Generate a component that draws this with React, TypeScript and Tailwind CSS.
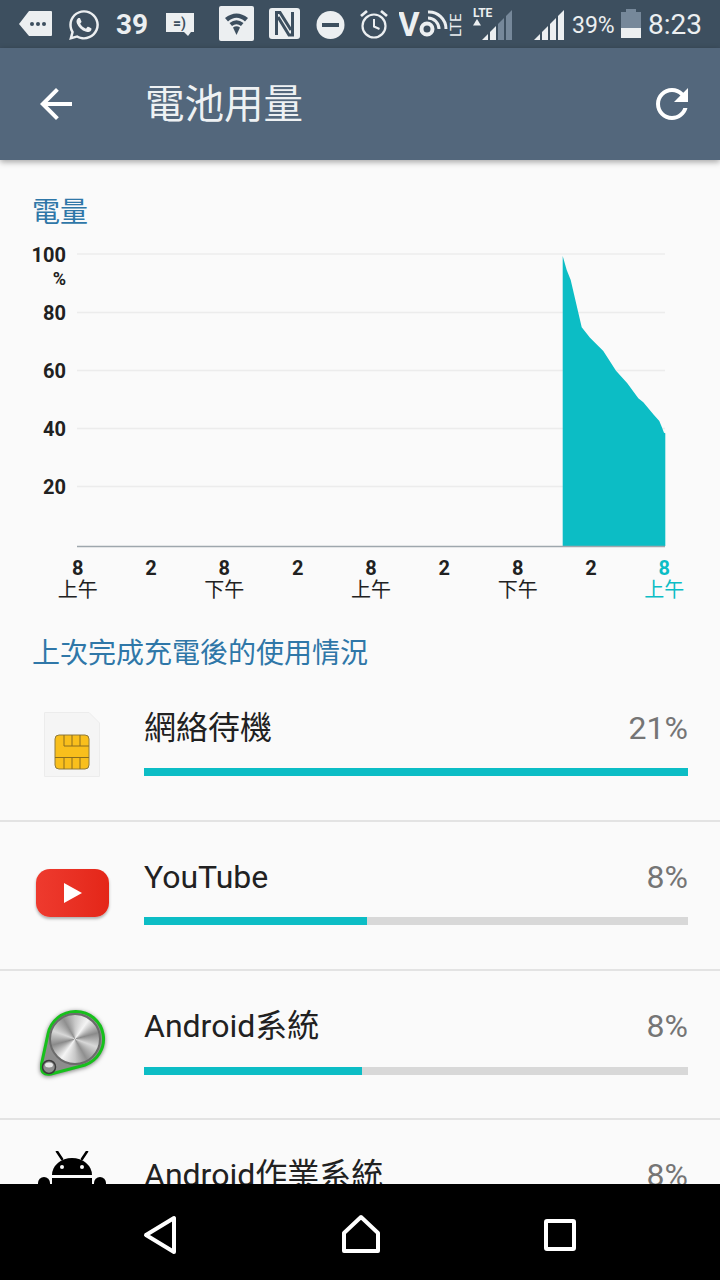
import { ReactNode } from "react";
import { FaWhatsapp } from "react-icons/fa";

const ink = "#eceff1";
const dark = "#3d4f5f";

// status bar icons are drawn in page coordinates, viewBox just crops the slice they sit in
function Slice({ x, w, className, children }: { x: number; w: number; className?: string; children: ReactNode }) {
  return (
    <svg width={w} height={48} viewBox={`${x} 0 ${w} 48`} className={`shrink-0 ${className ?? ""}`}>
      {children}
    </svg>
  );
}

function Bars({ x, lit }: { x: number; lit: number }) {
  return (
    <>
      {[0, 1, 2, 3].map((i) => {
        const a = x + i * 8;
        const b = a + 6;
        return (
          <polygon
            key={i}
            points={`${a},40 ${a},${40 - (a - x)} ${b},${40 - (b - x)} ${b},40`}
            fill={i < lit ? ink : "#76889a"}
          />
        );
      })}
    </>
  );
}

function StatusBar() {
  return (
    <div className="flex h-[48px] shrink-0 items-center bg-[#3d4f5f] pl-[19px] text-[#eceff1]">
      <Slice x={19} w={33}>
        <path d="M19 24 29 11H51a1 1 0 0 1 1 1V35a1 1 0 0 1-1 1H29Z" fill={ink} />
        <circle cx="32" cy="24" r="2" fill={dark} />
        <circle cx="38" cy="24" r="2" fill={dark} />
        <circle cx="44" cy="24" r="2" fill={dark} />
      </Slice>
      <FaWhatsapp className="ml-[15px] mt-[2px] shrink-0" size={34} color={ink} />
      <span className="ml-[15px] mt-[2px] w-[33px] shrink-0 font-['Roboto',sans-serif] text-[28px] font-bold leading-none">39</span>
      <Slice x={166} w={28} className="ml-[17px]">
        <path d="M166 13H194V32H191L188 36 184 32H166Z" fill={ink} />
        <text x="173" y="28" fontSize="14" fontWeight="700" fontFamily="Roboto, sans-serif" fill={dark}>=)</text>
      </Slice>
      <Slice x={219} w={35} className="ml-[25px]">
        <rect x="219" y="6" width="35" height="35" rx="2" fill={ink} />
        <path d="M225 18Q236.500 9 248 18L245 21.500Q236.500 14 228 21.500Z" fill={dark} />
        <path d="M229.500 23Q236.500 17.500 243.500 23L241 26Q236.500 22.500 232 26Z" fill={dark} />
        <path d="M233 27.500Q236.500 25 240 27.500L236.500 35Z" fill={dark} />
      </Slice>
      <Slice x={269} w={31} className="ml-[15px]">
        <rect x="269" y="8" width="31" height="31" rx="3" fill={ink} />
        <path d="M276.500 35V12.500H280L291 30M292.500 12V35H289L278 17" fill="none" stroke={dark} strokeWidth="3" />
      </Slice>
      <Slice x={316} w={29} className="ml-[16px]">
        <circle cx="330.500" cy="25" r="14" fill={ink} />
        <rect x="322" y="23" width="17" height="4" fill={dark} />
      </Slice>
      <Slice x={360} w={28} className="ml-[15px]">
        <circle cx="374" cy="26" r="11.500" fill="none" stroke={ink} strokeWidth="2.200" />
        <path d="M374 19V26.500L379.500 29" fill="none" stroke={ink} strokeWidth="2" />
        <path d="M361 16 367 11M387 16 381 11" fill="none" stroke={ink} strokeWidth="2.800" />
      </Slice>
      <Slice x={399} w={64} className="ml-[11px]">
        <text x="398" y="36" fontSize="33" fontWeight="700" fontFamily="Roboto, sans-serif" fill={ink}>V</text>
        <circle cx="427" cy="29" r="5.500" fill="none" stroke={ink} strokeWidth="4" />
        <path d="M428 18A11 11 0 0 1 439 29M428 12A17 17 0 0 1 446 29" fill="none" stroke={ink} strokeWidth="3" />
        <text x="0" y="0" transform="translate(461 37) rotate(-90)" fontSize="15" fontFamily="Roboto, sans-serif" fill={ink}>LTE</text>
      </Slice>
      <Slice x={473} w={39} className="ml-[10px]">
        <text x="473" y="17" fontSize="12" fontWeight="700" fontFamily="Roboto, sans-serif" fill={ink}>LTE</text>
        <polygon points="477,19 481,25.500 473,25.500" fill={ink} />
        <Bars x={482} lit={2} />
      </Slice>
      <Slice x={534} w={30} className="ml-[22px]">
        <Bars x={534} lit={4} />
      </Slice>
      <span className="ml-[8px] mt-[2px] w-[43px] shrink-0 whitespace-nowrap font-['Roboto',sans-serif] text-[23px] leading-none">39%</span>
      <Slice x={621} w={20} className="ml-[6px]">
        <path d="M621 12H626V9H636V12H641V38H621Z" fill="#76889a" />
        <rect x="621" y="28" width="20" height="10" fill={ink} />
      </Slice>
      <span className="ml-[7px] mt-[2px] shrink-0 font-['Roboto',sans-serif] text-[28px] leading-none">8:23</span>
    </div>
  );
}

function Toolbar() {
  return (
    <div className="relative z-10 flex h-[112px] shrink-0 items-center bg-[#53677c] pl-[32px] pr-[24px] shadow-[0_2px_6px_rgba(0,0,0,0.35)]">
      <svg width="48" height="48" viewBox="0 0 24 24" fill="#fff" className="shrink-0">
        <path d="M20 11H7.830l5.590-5.590L12 4l-8 8 8 8 1.410-1.410L7.830 13H20v-2z" />
      </svg>
      <h1 className="ml-[65px] mt-[2px] flex-1 font-['Roboto','Noto_Sans_CJK_TC',sans-serif] text-[39.500px] font-normal leading-none text-[#eef1f3]">電池用量</h1>
      <svg width="48" height="48" viewBox="0 0 24 24" fill="#fff" className="shrink-0">
        <path d="M17.650 6.350C16.200 4.900 14.210 4 12 4c-4.420 0-7.990 3.580-7.990 8s3.570 8 7.990 8c3.730 0 6.840-2.550 7.730-6h-2.080c-.82 2.330-3.040 4-5.650 4-3.310 0-6-2.690-6-6s2.690-6 6-6c1.660 0 3.140.69 4.220 1.780L13 11h7V4l-2.350 2.350z" />
      </svg>
    </div>
  );
}

const area =
  "562.700,256 566.700,270 570.700,280 581.700,327.300 590,337.700 603.300,351 616,370.700 627.300,383.300 638.300,398.300 643.300,402.300 653.300,414.300 659.300,421 661.700,426.700 664,432.700 665.300,433.300 665.300,546 562.700,546";

function Chart() {
  const yLabels = ["80", "60", "40", "20"];
  const xLabels = [
    ["8", "上午"],
    ["2", ""],
    ["8", "下午"],
    ["2", ""],
    ["8", "上午"],
    ["2", ""],
    ["8", "下午"],
    ["2", ""],
    ["8", "上午"],
  ];
  return (
    <>
      <div className="mt-[9px] flex h-[310px]">
        <div className="w-[66px] shrink-0 pt-[1px] text-right text-[20px] font-bold leading-[24px] text-[#212121]">
          <div className="h-[58px]">
            100
            <div className="text-[18px] leading-[24px]">%</div>
          </div>
          {yLabels.map((label) => (
            <div key={label} className="h-[58px]">{label}</div>
          ))}
        </div>
        <svg width="654" height="310" viewBox="66 242 654 310" className="shrink-0">
          {[254, 312.500, 370.500, 428.500, 486.500].map((y) => (
            <line key={y} x1="77" x2="665" y1={y} y2={y} stroke="#ececec" strokeWidth="1.500" />
          ))}
          <polygon points={area} fill="#0cbdc5" />
          <line x1="77" x2="665" y1="546.500" y2="546.500" stroke="#9ea7ad" strokeWidth="1.500" />
        </svg>
      </div>
      <div className="ml-[41px] mt-[5px] grid w-[660px] grid-cols-9 text-center text-[#212121]">
        {xLabels.map(([hour, half], i) => (
          <div key={i} className={i === 8 ? "text-[#0cbdc5]" : ""}>
            <div className="text-[20px] font-bold leading-[22px]">{hour}</div>
            <div className="text-[20px] leading-[22px]">{half}</div>
          </div>
        ))}
      </div>
    </>
  );
}

function SimIcon() {
  return (
    <svg width="56" height="65" viewBox="44 712 56 65" className="mt-[-4px]">
      <path d="M44.500 712.500H89L99.500 723V776.500H44.500Z" fill="#f5f5f5" stroke="#ececec" />
      <rect x="55" y="735" width="34" height="34" rx="4" fill="#f9bf1c" stroke="#8f7a3c" />
      <path d="M64 735V746H89M72 735V746M80 735V746M55 757.500H89M64 757.500V769M72 757.500V769M80 757.500V769" fill="none" stroke="#8a6d1e" strokeWidth="1" />
    </svg>
  );
}

function YoutubeIcon() {
  return (
    <div className="ml-[1px] mt-[-4px] flex h-[48px] w-[73px] items-center justify-center rounded-[14px] bg-gradient-to-r from-[#ee3a2e] to-[#e42618] shadow-[0_2px_3px_rgba(0,0,0,0.3)]">
      <svg width="20" height="20" viewBox="0 0 20 20" className="ml-[1px]">
        <polygon points="1,0 19,10 1,20" fill="#fff" />
      </svg>
    </div>
  );
}

function MetalIcon() {
  return (
    <div className="relative ml-[6px] mt-[-2px] h-[70px] w-[70px]">
      <svg width="70" height="70" viewBox="40 1009 70 70" className="drop-shadow-[0_1px_2px_rgba(0,0,0,0.5)]">
        <path d="M76 1011.500A27.500 27.500 0 0 1 85 1065L51 1074Q40 1076 41.500 1064L48 1034A28 28 0 0 1 76 1011.500Z" fill="#8d8d8d" stroke="#17c01c" strokeWidth="3" />
        <circle cx="49" cy="1067" r="6.500" fill="#8f8f8f" stroke="#3a3a3a" strokeWidth="1.500" />
        <ellipse cx="49" cy="1065" rx="4" ry="2.500" fill="#e6e6e6" />
      </svg>
      <div className="absolute left-[9px] top-[4px] h-[52px] w-[52px] rounded-full border-2 border-[#6b6b6b] bg-[conic-gradient(#c8c8c8_0deg,#f4f4f4_35deg,#8a8a8a_75deg,#d8d8d8_110deg,#8f8f8f_150deg,#c8c8c8_180deg,#f4f4f4_215deg,#8a8a8a_255deg,#d8d8d8_290deg,#8f8f8f_330deg,#c8c8c8_360deg)]" />
    </div>
  );
}

function AndroidIcon() {
  return (
    <svg width="68" height="84" viewBox="38 1152 68 84" className="mt-[-3px]" fill="#000">
      <path d="M57 1152.500 62 1160M87 1152.500 82 1160" stroke="#000" strokeWidth="2.500" strokeLinecap="round" />
      <path d="M52 1176A20 17 0 0 1 92 1176Z" />
      <circle cx="62" cy="1168" r="2" fill="#fafafa" />
      <circle cx="82" cy="1168" r="2" fill="#fafafa" />
      <rect x="38" y="1178" width="12" height="34" rx="6" />
      <rect x="94" y="1178" width="12" height="34" rx="6" />
      <path d="M52 1179H92V1218H52Z" />
    </svg>
  );
}

type Usage = { name: string; percent: string; fill: string; icon: ReactNode };

const usage: Usage[] = [
  { name: "網絡待機", percent: "21%", fill: "w-full", icon: <SimIcon /> },
  { name: "YouTube", percent: "8%", fill: "w-[223px]", icon: <YoutubeIcon /> },
  { name: "Android系統", percent: "8%", fill: "w-[218px]", icon: <MetalIcon /> },
  { name: "Android作業系統", percent: "8%", fill: "w-[218px]", icon: <AndroidIcon /> },
];

function UsageRow({ item }: { item: Usage }) {
  return (
    <div className="flex h-[149.330px] shrink-0 border-b-2 border-[#e3e3e3]">
      <div className="flex w-[144px] shrink-0 items-center justify-center">{item.icon}</div>
      <div className="flex-1 pr-[32px] pt-[33px]">
        <div className="flex h-[44px] items-center justify-between">
          <span className="text-[32px] leading-[44px] text-[#212121]">{item.name}</span>
          <span className="text-[32px] leading-[44px] text-[#757575]">{item.percent}</span>
        </div>
        <div className="mt-[18.500px] h-[8px] bg-[#d8d8d8]">
          <div className={`h-full bg-[#0cbdc5] ${item.fill}`} />
        </div>
      </div>
    </div>
  );
}

function NavBar() {
  return (
    <div className="flex h-[96px] shrink-0 items-center justify-between bg-black pl-[142px] pr-[144px] pt-[6px]">
      <svg width="36" height="40" viewBox="0 0 36 40">
        <path d="M32 3V37L4 20Z" fill="none" stroke="#fff" strokeWidth="4" strokeLinejoin="round" />
      </svg>
      <svg width="40" height="40" viewBox="0 0 40 40" className="mt-[-2px]">
        <path d="M20 3 37 19V37H3V19Z" fill="none" stroke="#fff" strokeWidth="4" strokeLinejoin="round" />
      </svg>
      <svg width="32" height="32" viewBox="0 0 32 32">
        <rect x="2" y="2" width="28" height="28" rx="1" fill="none" stroke="#fff" strokeWidth="4" />
      </svg>
    </div>
  );
}

export default function App() {
  return (
    <div className="flex h-[1280px] w-[720px] flex-col overflow-hidden bg-[#fafafa] font-['Roboto','Noto_Sans_CJK_TC',sans-serif]">
      <StatusBar />
      <Toolbar />
      <main className="flex min-h-0 flex-1 flex-col overflow-hidden">
        <h2 className="mt-[33px] pl-[32px] text-[28px] font-normal leading-[40px] text-[#2f77a8]">電量</h2>
        <Chart />
        <h2 className="mt-[33px] h-[38.500px] pl-[32px] text-[28px] font-normal leading-[40px] text-[#2f77a8]">上次完成充電後的使用情況</h2>
        {usage.map((item) => (
          <UsageRow key={item.name} item={item} />
        ))}
      </main>
      <NavBar />
    </div>
  );
}
